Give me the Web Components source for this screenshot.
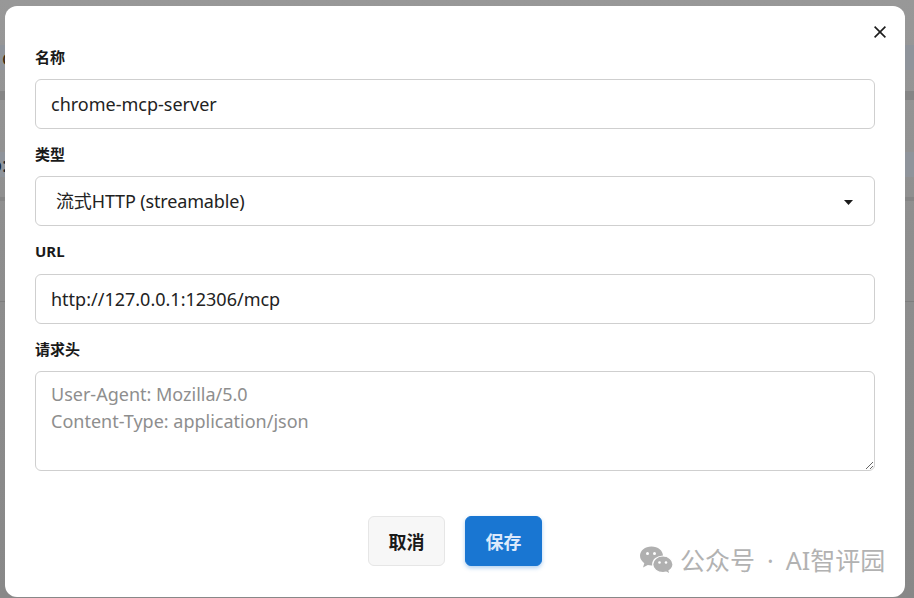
<!DOCTYPE html>
<html lang="zh">
<head>
<meta charset="utf-8">
<title>MCP</title>
<style>
html, body { margin: 0; height: 100%; overflow: hidden; }
body { font-family: "Noto Sans", "Noto Sans CJK SC", sans-serif; }
</style>
</head>
<body>
<back-page>
	<back-row h="45"></back-row>
	<back-row h="25" tone="blue" text="c" color="#3a2a10"></back-row>
	<back-row h="21"></back-row>
	<back-row h="9" tone="dark"></back-row>
	<back-row h="52"></back-row>
	<back-row h="25" tone="blue" text="o:" color="#1c2530" shift="-10"></back-row>
	<back-row h="20"></back-row>
	<back-row h="4" tone="dark"></back-row>
	<back-row h="100"></back-row>
	<back-row h="1" tone="line"></back-row>
</back-page>
<modal-overlay>
	<server-dialog>
		<form-field label="名称"><text-box value="chrome-mcp-server"></text-box></form-field>
		<form-field label="类型"><select-box value="流式HTTP (streamable)"></select-box></form-field>
		<form-field label="URL"><text-box value="http://127.0.0.1:12306/mcp"></text-box></form-field>
		<form-field label="请求头"><area-box placeholder="User-Agent: Mozilla/5.0&#10;Content-Type: application/json"></area-box></form-field>
		<action-button slot="actions">取消</action-button>
		<action-button slot="actions" primary>保存</action-button>
	</server-dialog>
</modal-overlay>
<wechat-mark>公众号 · AI智评园</wechat-mark>

<script>
(function() {
	const FONT = '"Noto Sans", "Noto Sans CJK SC", sans-serif';

	class BackPage extends HTMLElement {
		constructor() {
			super();
			this.attachShadow({mode: "open"}).innerHTML = `
				<style>
				:host {
					display: flex;
					flex-direction: column;
					height: 100vh;
					overflow: hidden;
					background: linear-gradient(#989898, #8e8e8e 40%, #888888);
				}
				</style>
				<slot></slot>`;
		}
	}

	class BackRow extends HTMLElement {
		constructor() {
			super();
			const tones = {blue: "#8f949b", dark: "#858585", line: "#7e7e7e"};
			const bg = tones[this.getAttribute("tone")] || "transparent";
			const h = this.getAttribute("h");
			this.attachShadow({mode: "open"}).innerHTML = `
				<style>
				:host {
					display: block;
					flex: none;
					height: ${h}px;
					background: ${bg};
					overflow: hidden;
					font: 20px/${h}px ${FONT};
					color: ${this.getAttribute("color") || "#333"};
					text-indent: ${this.getAttribute("shift") || 2}px;
				}
				</style>
				${this.getAttribute("text") || ""}`;
		}
	}

	class ModalOverlay extends HTMLElement {
		constructor() {
			super();
			this.attachShadow({mode: "open"}).innerHTML = `
				<style>
				:host {
					position: fixed;
					inset: 0;
					display: flex;
					padding: 6px 9px 1px 5px;
					box-sizing: border-box;
				}
				</style>
				<slot></slot>`;
		}
	}

	class ServerDialog extends HTMLElement {
		constructor() {
			super();
			this.attachShadow({mode: "open"}).innerHTML = `
				<style>
				:host {
					display: flex;
					flex-direction: column;
					flex: 1;
					position: relative;
					box-sizing: border-box;
					background: #fff;
					border-radius: 12px;
					padding: 40.67px 30px 0;
				}
				.close {
					position: absolute;
					top: 20px;
					right: 19px;
					width: 12px;
					height: 12px;
				}
				.actions {
					display: flex;
					justify-content: center;
					gap: 20px;
					margin-top: 30px;
				}
				</style>
				<svg class="close" viewBox="0 0 12 12" fill="none" stroke="#1c1c1c" stroke-width="1.6">
					<path d="M.6.6l10.8 10.8M11.4.6L.6 11.4"/>
				</svg>
				<slot></slot>
				<div class="actions"><slot name="actions"></slot></div>`;
		}
	}

	class FormField extends HTMLElement {
		constructor() {
			super();
			this.attachShadow({mode: "open"}).innerHTML = `
				<style>
				:host { display: block; margin-bottom: 15px; }
				label {
					display: block;
					font: 700 15px/21.33px ${FONT};
					color: #1a1a1a;
					margin-bottom: 11px;
				}
				</style>
				<label>${this.getAttribute("label")}</label>
				<slot></slot>`;
		}
	}

	const BOX_CSS = `
		:host { display: block; }
		input, textarea {
			display: block;
			width: 100%;
			box-sizing: border-box;
			border: 1px solid #cfcfcf;
			border-radius: 6px;
			background: #fff;
			color: #222;
			font: 18px/27px ${FONT};
			padding: 0 15px;
			outline: none;
		}
		input { height: 50px; }
		textarea { height: 100px; padding-top: 9px; padding-bottom: 9px; }
		::placeholder { color: #8e8e8e; opacity: 1; }
	`;

	class TextBox extends HTMLElement {
		constructor() {
			super();
			const root = this.attachShadow({mode: "open"});
			root.innerHTML = `<style>${BOX_CSS}</style><input type="text">`;
			root.querySelector("input").value = this.getAttribute("value") || "";
		}
	}

	class AreaBox extends HTMLElement {
		constructor() {
			super();
			const root = this.attachShadow({mode: "open"});
			root.innerHTML = `<style>${BOX_CSS}</style><textarea></textarea>`;
			root.querySelector("textarea").placeholder = this.getAttribute("placeholder") || "";
		}
	}

	class SelectBox extends HTMLElement {
		constructor() {
			super();
			this.attachShadow({mode: "open"}).innerHTML = `
				<style>
				:host {
					display: flex;
					align-items: center;
					justify-content: space-between;
					height: 50px;
					box-sizing: border-box;
					border: 1px solid #cfcfcf;
					border-radius: 6px;
					padding: 0 21px 2px 20px;
					font: 18px ${FONT};
					color: #222;
				}
				span { letter-spacing: -.15px; }
				svg { width: 9px; height: 5px; margin-top: 4px; }
				</style>
				<span>${this.getAttribute("value")}</span>
				<svg viewBox="0 0 9 5"><path d="M0 0h9L4.500 5z" fill="#1c1c1c"/></svg>`;
		}
	}

	class ActionButton extends HTMLElement {
		constructor() {
			super();
			this.attachShadow({mode: "open"}).innerHTML = `
				<style>
				:host {
					display: flex;
					align-items: center;
					justify-content: center;
					box-sizing: border-box;
					width: 77px;
					height: 50px;
					border: 1px solid #e6e6e6;
					border-radius: 6px;
					background: #f7f7f7;
					color: #1a1a1a;
					font: 700 18px ${FONT};
				}
				:host([primary]) {
					border-color: #1976d2;
					background: #1976d2;
					color: #dce9fb;
					box-shadow: 0 2px 4px rgba(25, 118, 210, .35);
				}
				</style>
				<slot></slot>`;
		}
	}

	class WechatMark extends HTMLElement {
		constructor() {
			super();
			this.attachShadow({mode: "open"}).innerHTML = `
				<style>
				:host {
					position: fixed;
					left: 640px;
					top: 545px;
					display: flex;
					align-items: center;
					gap: 5px;
					height: 30px;
					font: 25px/30px ${FONT};
					word-spacing: 5.5px;
					color: #b2b2b2;
					white-space: nowrap;
				}
				svg { width: 35px; height: 30px; flex: none; }
				</style>
				<svg viewBox="0 0 35 30">
					<path fill="#b0b0b0" d="M11.500 1.500C5 1.500 0 5.600 0 10.800c0 3 1.600 5.500 4.300 7.400L3 22.500l4.800-2.500c1.200.3 2.500.5 3.700.5 6.500 0 11.500-4.100 11.500-9.700 0-5.200-5-9.300-11.500-9.300z"/>
					<path fill="#b0b0b0" stroke="#fff" stroke-width="1.200" d="M23 11c-5.800 0-10.300 3.700-10.300 8.300s4.500 8.300 10.300 8.300c1.100 0 2.200-.2 3.200-.5l3.900 2.100-1.100-3.500c2.400-1.500 4-3.900 4-6.400 0-4.600-4.600-8.300-10-8.300z"/>
					<circle cx="7.500" cy="8.500" r="1.500" fill="#fff"/><circle cx="14.500" cy="8.500" r="1.500" fill="#fff"/>
					<circle cx="19.500" cy="17.500" r="1.300" fill="#fff"/><circle cx="26" cy="17.500" r="1.300" fill="#fff"/>
				</svg>
				<span><slot></slot></span>`;
		}
	}

	customElements.define("back-page", BackPage);
	customElements.define("back-row", BackRow);
	customElements.define("modal-overlay", ModalOverlay);
	customElements.define("server-dialog", ServerDialog);
	customElements.define("form-field", FormField);
	customElements.define("text-box", TextBox);
	customElements.define("area-box", AreaBox);
	customElements.define("select-box", SelectBox);
	customElements.define("action-button", ActionButton);
	customElements.define("wechat-mark", WechatMark);
})();
</script>
</body>
</html>
